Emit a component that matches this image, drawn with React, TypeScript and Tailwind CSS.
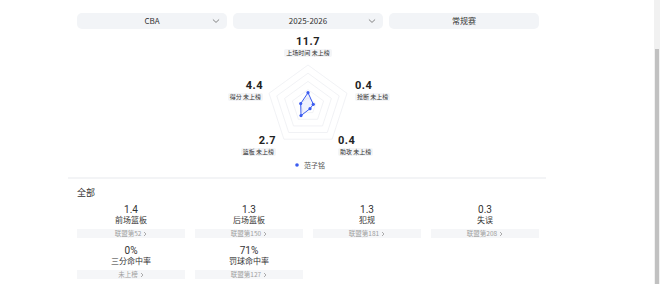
import React from "react";

const CJK = '"Noto Sans CJK SC", "Noto Sans", sans-serif';
const NUM = 'Roboto, "Noto Sans", sans-serif';

function Chevron() {
  return (
    <svg width="8" height="6" viewBox="0 0 8 6" fill="none">
      <path d="M1.2 1.8 L4 4.4 L6.8 1.8" stroke="#777" strokeWidth="0.9" strokeLinecap="round" strokeLinejoin="round" />
    </svg>
  );
}

function Select({ label, chevron = true }: { label: string; chevron?: boolean }) {
  return (
    <div className="relative flex h-[16px] flex-1 items-center justify-center rounded-[5px] bg-[#f2f4f7] text-[8px] text-[#333]">
      <span>{label}</span>
      {chevron && (
        <span className="absolute right-[7px] top-[5px] flex">
          <Chevron />
        </span>
      )}
    </div>
  );
}

const CX = 240; // 308 - 68
const CY = 73; // 106 - 33
const R = 41;
const angles = [-90, -18, 54, 126, 198].map((a) => (a * Math.PI) / 180);
function pent(r: number) {
  return angles.map((a) => `${(CX + r * Math.cos(a)).toFixed(1)},${(CY + r * Math.sin(a)).toFixed(1)}`).join(" ");
}
const dataPts: [number, number][] = [
  [308 - 68, 92.7 - 33],
  [313.3 - 68, 104.3 - 33],
  [310 - 68, 108.7 - 33],
  [301 - 68, 115.6 - 33],
  [300.7 - 68, 103.6 - 33],
];

function RadarLabel({
  value,
  name,
  className,
  align,
}: {
  value: string;
  name: string;
  className: string;
  align: "start" | "end" | "center";
}) {
  const al = align === "start" ? "items-start" : align === "end" ? "items-end" : "items-center";
  return (
    <div className={`absolute flex flex-col ${al} ${className}`}>
      <div className="text-[11px] font-bold leading-[12px] tracking-[0.5px] text-[#222]" style={{ fontFamily: NUM }}>
        {value}
      </div>
      <div className="mt-[1px] rounded-[2px] bg-[#f4f5f7] px-[2px] text-[6px] leading-[8px] text-[#333]" style={{ fontFamily: CJK }}>
        {name}
      </div>
    </div>
  );
}

function Stat({ value, name, rank }: { value: string; name: string; rank: string }) {
  return (
    <div className="flex flex-col items-center">
      <div className="text-[10px] leading-[10px] text-[#333]" style={{ fontFamily: NUM }}>
        {value}
      </div>
      <div className="text-[8px] leading-[10px] text-[#333]">{name}</div>
      <div className="mt-[4px] flex h-[9px] w-full items-center justify-center gap-[2px] bg-[#f5f6f8] text-[6.5px] text-[#a0a0a0]">
        <span>{rank}</span>
        <svg width="4" height="6" viewBox="0 0 4 6" fill="none">
          <path d="M1 1 L3 3 L1 5" stroke="#999" strokeWidth="0.8" />
        </svg>
      </div>
    </div>
  );
}

export default function App() {
  return (
    <div className="relative h-[284px] w-[660px] overflow-hidden bg-white" style={{ fontFamily: CJK }}>
      <div className="ml-[68px] w-[480px]">
        <div className="flex gap-[6px] px-[9px] pt-[13px]">
          <Select label="CBA" />
          <Select label="2025-2026" />
          <Select label="常规赛" chevron={false} />
        </div>

        <div className="relative mt-[4px] h-[144px] w-full">
          <svg className="absolute left-0 top-0" width="480" height="144" viewBox="0 0 480 144">
            {[1, 0.8, 0.6, 0.4, 0.2].map((k) => (
              <polygon key={k} points={pent(R * k)} fill="none" stroke="#eeeff2" strokeWidth="0.8" />
            ))}
            <polygon
              points={dataPts.map((p) => p.join(",")).join(" ")}
              fill="rgba(59,91,245,0.08)"
              stroke="#3b5cf0"
              strokeWidth="1"
            />
            {dataPts.map((p, i) => (
              <circle key={i} cx={p[0]} cy={p[1]} r="1.6" fill="#3b5cf0" />
            ))}
            <circle cx={297 - 68} cy={165 - 33} r="1.8" fill="#3b5cf0" />
          </svg>
          <RadarLabel value="11.7" name="上场时间 未上榜" align="center" className="left-[190px] top-[3px] w-[100px]" />
          <RadarLabel value="4.4" name="得分 未上榜" align="end" className="right-[285px] top-[47px]" />
          <RadarLabel value="0.4" name="抢断 未上榜" align="start" className="left-[287px] top-[47px]" />
          <RadarLabel value="2.7" name="篮板 未上榜" align="end" className="right-[272px] top-[102px]" />
          <RadarLabel value="0.4" name="助攻 未上榜" align="start" className="left-[270px] top-[102px]" />
          <div className="absolute left-[236px] top-[127px] text-[7px] leading-[10px] text-[#555]">范子铭</div>
        </div>

        <div className="h-[2px] w-[478px] bg-[#f3f4f6]" />

        <div className="px-[9px] pt-[8px]">
          <div className="text-[9px] leading-[12px] text-[#333]">全部</div>
          <div className="mt-[6px] grid grid-cols-4 gap-x-[10px] gap-y-[8px]">
            <Stat value="1.4" name="前场篮板" rank="联盟第52" />
            <Stat value="1.3" name="后场篮板" rank="联盟第150" />
            <Stat value="1.3" name="犯规" rank="联盟第181" />
            <Stat value="0.3" name="失误" rank="联盟第208" />
            <Stat value="0%" name="三分命中率" rank="未上榜" />
            <Stat value="71%" name="罚球命中率" rank="联盟第127" />
          </div>
        </div>
      </div>

      <div className="absolute right-0 top-0 h-full w-[6px] bg-[#f1f1f1]">
        <div className="absolute bottom-0 left-[1px] top-[49px] w-[4px] bg-[#c1c1c1]" />
      </div>
    </div>
  );
}
